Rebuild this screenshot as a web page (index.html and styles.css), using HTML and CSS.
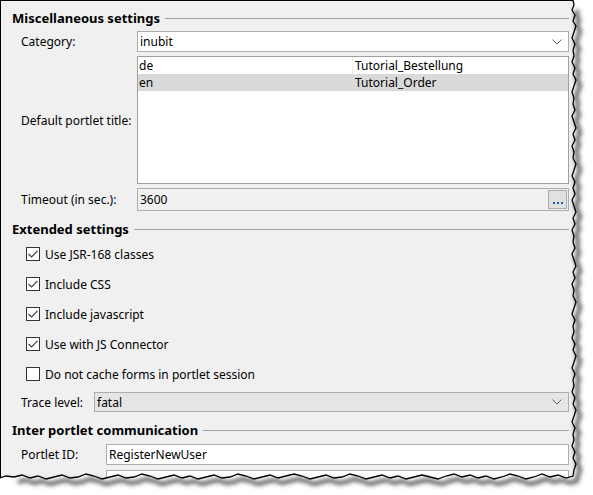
FILE: index.html
```html
<!DOCTYPE html>
<html>
<head>
<meta charset="utf-8">
<link rel="stylesheet" href="styles.css">
</head>
<body>
<div class="window">
  <div class="panel">
    <div class="section-title"><span>Miscellaneous settings</span></div>
    <div class="form form-misc">
      <label>Category:</label>
      <div class="combo"><span>inubit</span><svg class="chev" width="10" height="6" viewBox="0 0 10 6"><polyline points="0.5,0.5 5,5 9.5,0.5" fill="none" stroke="#606060" stroke-width="1"/></svg></div>
      <label>Default portlet title:</label>
      <div class="list">
        <div class="list-row"><span>de</span><span class="c2">Tutorial_Bestellung</span></div>
        <div class="list-row sel"><span>en</span><span class="c2">Tutorial_Order</span></div>
      </div>
      <label>Timeout (in sec.):</label>
      <div class="field timeout"><span>3600</span><div class="dots-btn"><i></i><i></i><i></i></div></div>
    </div>

    <div class="section-title sec2"><span>Extended settings</span></div>
    <div class="checks">
      <div class="check"><span class="box"><svg width="12" height="12" viewBox="0 0 12 12"><polyline points="1.5,6 4.6,9 10.5,2.8" fill="none" stroke="#404040" stroke-width="1.2"/></svg></span><span>Use JSR-168 classes</span></div>
      <div class="check"><span class="box"><svg width="12" height="12" viewBox="0 0 12 12"><polyline points="1.5,6 4.6,9 10.5,2.8" fill="none" stroke="#404040" stroke-width="1.2"/></svg></span><span>Include CSS</span></div>
      <div class="check"><span class="box"><svg width="12" height="12" viewBox="0 0 12 12"><polyline points="1.5,6 4.6,9 10.5,2.8" fill="none" stroke="#404040" stroke-width="1.2"/></svg></span><span>Include javascript</span></div>
      <div class="check"><span class="box"><svg width="12" height="12" viewBox="0 0 12 12"><polyline points="1.5,6 4.6,9 10.5,2.8" fill="none" stroke="#404040" stroke-width="1.2"/></svg></span><span>Use with JS Connector</span></div>
      <div class="check"><span class="box"></span><span>Do not cache forms in portlet session</span></div>
    </div>
    <div class="form form-trace">
      <label>Trace level:</label>
      <div class="combo gray"><span>fatal</span><svg class="chev" width="10" height="6" viewBox="0 0 10 6"><polyline points="0.5,0.5 5,5 9.5,0.5" fill="none" stroke="#606060" stroke-width="1"/></svg></div>
    </div>

    <div class="section-title sec3"><span>Inter portlet communication</span></div>
    <div class="form form-portlet">
      <label>Portlet ID:</label>
      <div class="field white"><span>RegisterNewUser</span></div>
      <label></label>
      <div class="field white"></div>
    </div>
  </div>

  <svg class="tear" width="593" height="495" viewBox="0 0 593 495">
    <defs>
      <filter id="blur" x="-10%" y="-10%" width="120%" height="120%"><feGaussianBlur stdDeviation="2"/></filter>
    </defs>
    <path fill="#fff" d="M573,0 L574,5 L572,10 L575,15 L573,21 L576,26 L574,32 L572,38 L575,44 L573,50 L574,56 L572,62 L575,68 L573,74 L576,80 L574,86 L572,92 L574,98 L573,104 L575,110 L572,116 L574,122 L576,128 L573,134 L575,140 L572,146 L574,152 L573,158 L576,164 L574,170 L572,176 L575,182 L573,188 L575,194 L572,200 L574,206 L576,212 L573,218 L575,224 L572,230 L574,236 L573,242 L575,248 L572,254 L574,260 L576,266 L573,272 L575,278 L572,284 L574,290 L573,296 L576,302 L574,308 L572,314 L575,320 L573,326 L574,332 L572,338 L575,344 L573,350 L576,356 L574,362 L572,368 L575,374 L573,380 L574,386 L572,392 L575,398 L573,404 L576,410 L574,416 L572,422 L575,428 L573,434 L574,440 L572,446 L575,452 L573,458 L576,464 L574,470 L573,476 L566,478 L558,475 L550,477 L542,474 L534,477 L526,479 L518,476 L510,474 L502,477 L494,479 L486,476 L478,478 L470,475 L462,477 L454,474 L446,476 L438,479 L430,477 L422,475 L414,477 L406,479 L398,476 L390,478 L382,475 L374,477 L366,479 L358,476 L350,474 L342,477 L334,478 L326,475 L318,477 L310,479 L302,476 L294,474 L286,476 L278,478 L270,475 L262,477 L254,479 L246,476 L238,474 L230,477 L222,478 L214,475 L206,477 L198,479 L190,476 L182,478 L174,475 L166,477 L158,479 L150,476 L142,474 L134,477 L126,478 L118,475 L110,477 L102,479 L94,476 L86,474 L78,477 L70,478 L62,475 L54,477 L46,479 L38,476 L30,478 L22,475 L14,477 L6,476 L0,478 L0,495 L593,495 L593,0 Z"/>
    <path fill="none" stroke="#3c3c3c" stroke-width="4" stroke-opacity="0.85" filter="url(#blur)" transform="translate(4,5)" d="M573,8 L574,5 L572,10 L575,15 L573,21 L576,26 L574,32 L572,38 L575,44 L573,50 L574,56 L572,62 L575,68 L573,74 L576,80 L574,86 L572,92 L574,98 L573,104 L575,110 L572,116 L574,122 L576,128 L573,134 L575,140 L572,146 L574,152 L573,158 L576,164 L574,170 L572,176 L575,182 L573,188 L575,194 L572,200 L574,206 L576,212 L573,218 L575,224 L572,230 L574,236 L573,242 L575,248 L572,254 L574,260 L576,266 L573,272 L575,278 L572,284 L574,290 L573,296 L576,302 L574,308 L572,314 L575,320 L573,326 L574,332 L572,338 L575,344 L573,350 L576,356 L574,362 L572,368 L575,374 L573,380 L574,386 L572,392 L575,398 L573,404 L576,410 L574,416 L572,422 L575,428 L573,434 L574,440 L572,446 L575,452 L573,458 L576,464 L574,470 L573,476 L566,478 L558,475 L550,477 L542,474 L534,477 L526,479 L518,476 L510,474 L502,477 L494,479 L486,476 L478,478 L470,475 L462,477 L454,474 L446,476 L438,479 L430,477 L422,475 L414,477 L406,479 L398,476 L390,478 L382,475 L374,477 L366,479 L358,476 L350,474 L342,477 L334,478 L326,475 L318,477 L310,479 L302,476 L294,474 L286,476 L278,478 L270,475 L262,477 L254,479 L246,476 L238,474 L230,477 L222,478 L214,475 L206,477 L198,479 L190,476 L182,478 L174,475 L166,477 L158,479 L150,476 L142,474 L134,477 L126,478 L118,475 L110,477 L102,479 L94,476 L86,474 L78,477 L70,478 L62,475 L54,477 L46,479 L38,476 L30,478 L22,475 L14,477"/>
    <path fill="none" stroke="#000" stroke-width="1.3" d="M573,0 L574,5 L572,10 L575,15 L573,21 L576,26 L574,32 L572,38 L575,44 L573,50 L574,56 L572,62 L575,68 L573,74 L576,80 L574,86 L572,92 L574,98 L573,104 L575,110 L572,116 L574,122 L576,128 L573,134 L575,140 L572,146 L574,152 L573,158 L576,164 L574,170 L572,176 L575,182 L573,188 L575,194 L572,200 L574,206 L576,212 L573,218 L575,224 L572,230 L574,236 L573,242 L575,248 L572,254 L574,260 L576,266 L573,272 L575,278 L572,284 L574,290 L573,296 L576,302 L574,308 L572,314 L575,320 L573,326 L574,332 L572,338 L575,344 L573,350 L576,356 L574,362 L572,368 L575,374 L573,380 L574,386 L572,392 L575,398 L573,404 L576,410 L574,416 L572,422 L575,428 L573,434 L574,440 L572,446 L575,452 L573,458 L576,464 L574,470 L573,476 L566,478 L558,475 L550,477 L542,474 L534,477 L526,479 L518,476 L510,474 L502,477 L494,479 L486,476 L478,478 L470,475 L462,477 L454,474 L446,476 L438,479 L430,477 L422,475 L414,477 L406,479 L398,476 L390,478 L382,475 L374,477 L366,479 L358,476 L350,474 L342,477 L334,478 L326,475 L318,477 L310,479 L302,476 L294,474 L286,476 L278,478 L270,475 L262,477 L254,479 L246,476 L238,474 L230,477 L222,478 L214,475 L206,477 L198,479 L190,476 L182,478 L174,475 L166,477 L158,479 L150,476 L142,474 L134,477 L126,478 L118,475 L110,477 L102,479 L94,476 L86,474 L78,477 L70,478 L62,475 L54,477 L46,479 L38,476 L30,478 L22,475 L14,477 L6,476 L0,478"/>
  </svg>
</div>
</body>
</html>
```

FILE: styles.css
```css
* { box-sizing: border-box; }

body {
  margin: 0;
  background: #fff;
  font-family: "Noto Sans", "Open Sans", sans-serif;
  font-size: 12px;
  color: #000;
}

.window {
  position: relative;
  width: 593px;
  height: 495px;
  overflow: hidden;
}

.panel {
  width: 590px;
  height: 492px;
  background: #f0f0f0;
  border-left: 1px solid #000;
  border-top: 1px solid #000;
  padding: 9px 21px 0 11px;
}

.section-title {
  display: flex;
  align-items: center;
  gap: 5px;
  height: 17px;
  line-height: 17px;
  font-weight: bold;
  font-size: 13px;
}

.section-title::after {
  content: "";
  flex: 1;
  height: 1px;
  background: #a0a0a0;
}

.sec2 { margin-top: 10px; }
.sec3 { margin-top: 10px; }

.form {
  display: grid;
  padding-left: 9px;
  align-items: center;
}

.form-misc {
  margin-top: 4px;
  grid-template-columns: 116px 1fr;
  grid-template-rows: 21px 128px 23px;
  row-gap: 4px;
}

.form-trace {
  margin-top: 3px;
  grid-template-columns: 73px 1fr;
  grid-template-rows: 20px;
}

.form-portlet {
  margin-top: 5px;
  grid-template-columns: 85px 1fr;
  grid-template-rows: 21px 21px;
  row-gap: 5px;
}

.form > .combo,
.form > .list,
.form > .field {
  align-self: stretch;
}

.combo {
  display: flex;
  align-items: center;
  border: 1px solid #adadad;
  background: #fff;
  padding: 0 6px 0 2px;
}

.combo.gray { background: #e5e5e5; }

.chev { margin-left: auto; }

.list {
  border: 1px solid #a0a0a0;
  background: #fff;
}

.list-row {
  display: grid;
  grid-template-columns: 214px 1fr;
  height: 17px;
  line-height: 17px;
}

.list-row > span { padding-left: 1px; }
.list-row > .c2 { padding-left: 2px; border-left: 1px solid #f0f0f0; }
.list-row.sel { background: #d9d9d9; }
.list-row.sel > .c2 { border-left-color: #d9d9d9; }

.field {
  display: flex;
  align-items: center;
  border: 1px solid #adadad;
  padding: 0 1px 0 2px;
}

.field.white { background: #fff; }
.timeout { background: #f0f0f0; }

.dots-btn {
  margin-left: auto;
  width: 19px;
  height: 19px;
  border: 1px solid #adadad;
  background: #e1e1e1;
  display: flex;
  justify-content: center;
  align-items: flex-end;
  gap: 2px;
  padding-bottom: 4px;
}

.dots-btn i {
  display: block;
  width: 2px;
  height: 2px;
  background: #1e5fb0;
}

.checks { margin-top: 1px; }

.check {
  height: 30px;
  display: flex;
  align-items: center;
  gap: 5px;
  padding-left: 14px;
}

.box {
  width: 14px;
  height: 14px;
  border: 1px solid #333;
  background: #fff;
  display: flex;
  align-items: center;
  justify-content: center;
}

.tear {
  position: absolute;
  left: 0;
  top: 0;
}
```
